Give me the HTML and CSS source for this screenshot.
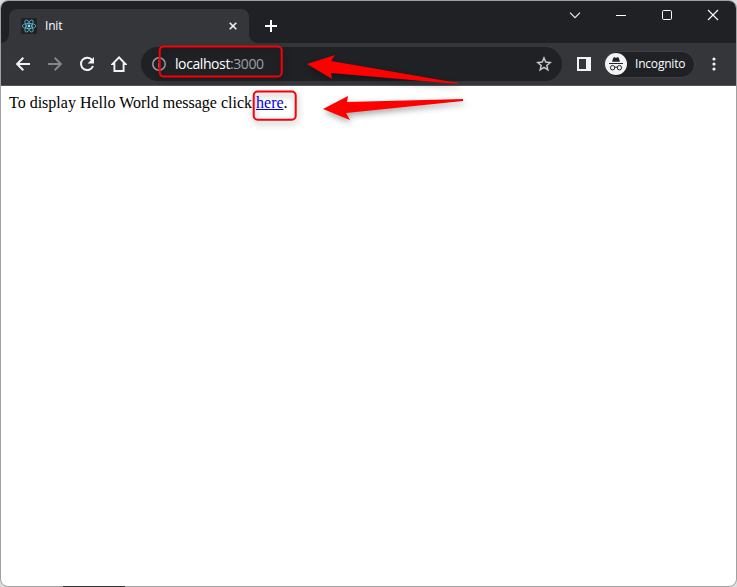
FILE: index.html
```html
<!DOCTYPE html>
<html lang="en">
<head>
<meta charset="utf-8">
<title>Init</title>
<link rel="stylesheet" href="styles.css">
</head>
<body>
<div class="window">
  <header class="tabstrip">
    <div class="tab">
      <svg class="favicon" width="16" height="16" viewBox="0 0 16 16"><rect width="16" height="16" rx="1" fill="#222"/><g fill="none" stroke="#58b4cc" stroke-width=".85"><ellipse cx="8" cy="8" rx="6.8" ry="2.6"/><ellipse cx="8" cy="8" rx="6.8" ry="2.6" transform="rotate(60 8 8)"/><ellipse cx="8" cy="8" rx="6.8" ry="2.6" transform="rotate(120 8 8)"/></g><circle cx="8" cy="8" r="1.4" fill="#7be4fa"/></svg>
      <span class="tab-title">Init</span>
      <svg class="tab-close" width="8" height="8" viewBox="0 0 8 8"><path d="M.7.7l6.6 6.6M7.3.7L.7 7.3" stroke="#f1f3f4" stroke-width="1.6"/></svg>
    </div>
    <svg class="new-tab" width="12" height="12" viewBox="0 0 12 12"><path d="M6 0v12M0 6h12" stroke="#fff" stroke-width="2"/></svg>
    <div class="controls">
      <svg width="12" height="12" viewBox="0 0 12 12"><path d="M1 3.7l5 5 5-5" fill="none" stroke="#f2f2f2" stroke-width="1.1"/></svg>
      <svg width="12" height="12" viewBox="0 0 12 12"><path d="M1 6.5h10" stroke="#fff"/></svg>
      <svg width="12" height="12" viewBox="0 0 12 12"><rect x="1.5" y="1.5" width="9" height="9" rx="1.2" fill="none" stroke="#fff"/></svg>
      <svg width="12" height="12" viewBox="0 0 12 12"><path d="M1 1l10 10M11 1L1 11" stroke="#fff" stroke-width="1.1"/></svg>
    </div>
  </header>
  <nav class="toolbar">
    <div class="nav-buttons">
      <svg width="16" height="16" viewBox="0 0 16 16"><path d="M15 8H2.5M8.3 1.8L2.1 8l6.2 6.2" fill="none" stroke="#f1f3f4" stroke-width="2"/></svg>
      <svg width="16" height="16" viewBox="0 0 16 16"><path d="M1 8h12.5M7.7 1.8L13.9 8l-6.2 6.2" fill="none" stroke="#85868a" stroke-width="2"/></svg>
      <svg width="16" height="16" viewBox="0 0 16 16"><path d="M13.2 4.2A6.2 6.2 0 1 0 14 10" fill="none" stroke="#f1f3f4" stroke-width="2"/><path d="M15 1v6.4H8.6z" fill="#f1f3f4"/></svg>
      <svg width="16" height="16" viewBox="0 0 16 16"><path d="M8 1.3L1.6 8H3.4v7h9.2V8h1.8z" fill="none" stroke="#f1f3f4" stroke-width="1.9"/></svg>
    </div>
    <div class="omnibox">
      <svg class="info" width="14" height="14" viewBox="0 0 14 14"><circle cx="7" cy="7" r="6.2" fill="none" stroke="#9aa0a6" stroke-width="1.5"/><path d="M7 3.3v1.5M7 6.1v4.6" stroke="#9aa0a6" stroke-width="1.5"/></svg>
      <span class="url">localhost<span class="port">:3000</span></span>
      <svg class="star" width="16" height="16" viewBox="0 0 16 16"><path d="M8 2l1.75 4.1 4.45.4-3.4 2.9 1.05 4.4L8 11.45 4.15 13.8 5.2 9.4 1.8 6.5l4.45-.4z" fill="none" stroke="#c4c7cb" stroke-width="1.5"/></svg>
    </div>
    <svg class="side-panel" width="14" height="14" viewBox="0 0 14 14"><path fill="#f1f3f4" fill-rule="evenodd" d="M0 0h14v14H0zM2 2v10h7V2z"/></svg>
    <div class="profile">
      <svg width="22" height="22" viewBox="0 0 22 22"><circle cx="11" cy="11" r="11" fill="#f1f3f4"/><path d="M7 8.8l1.3-4 .8-.5 1.9.5 1.9-.5.8.5 1.3 4z" fill="#202124"/><path d="M4 10.5h14" stroke="#202124" stroke-width="1.2"/><g fill="none" stroke="#202124"><circle cx="7.6" cy="14.7" r="2.2"/><circle cx="14.4" cy="14.7" r="2.2"/><path d="M9.7 14.4q1.3-.8 2.6 0"/></g></svg>
      <span>Incognito</span>
    </div>
    <svg class="menu" width="4" height="14" viewBox="0 0 4 14" fill="#f1f3f4"><circle cx="2" cy="2" r="1.6"/><circle cx="2" cy="7" r="1.6"/><circle cx="2" cy="12" r="1.6"/></svg>
  </nav>
  <main class="page">To display Hello World message click <a href="#">here</a>.</main>
</div>
<svg class="annotations" width="737" height="587" viewBox="0 0 737 587">
  <g fill="none" stroke="#f80008" stroke-width="2"><rect x="159.7" y="46.5" width="122" height="30" rx="4"/><rect x="253.7" y="91.5" width="42" height="28.3" rx="4"/></g>
  <path d="M307 64l28-9-4 6 127 22v1l-127-11 1 6z" fill="#f00"/>
  <path d="M323 109l25-13-1 6 116-3v2l-117 12 4 7z" fill="#f00"/>
</svg>
<div class="taskbar-edge"></div>
</body>
</html>
```
FILE: styles.css
```css
* { box-sizing: border-box; }
html, body { margin: 0; height: 100%; overflow: hidden; }
body { background: #dcdcdc; position: relative; }
svg { display: block; flex: none; }
.window {
  width: 737px; height: 587px;
  border: 1px solid #a0a0a0; border-radius: 8px;
  overflow: hidden; background: #fff;
}
.tabstrip {
  height: 42px; background: #202124;
  display: flex; align-items: flex-end; padding-left: 8px;
}
.tab {
  width: 240px; height: 34px; background: #35363a;
  border-radius: 8px 8px 0 0; position: relative;
  display: flex; align-items: center; padding: 0 12px;
}
.tab::before, .tab::after {
  content: ""; position: absolute; bottom: 0; width: 8px; height: 8px;
}
.tab::before { left: -8px; background: radial-gradient(circle at 0 0, transparent 7.5px, #35363a 8px); }
.tab::after { right: -8px; background: radial-gradient(circle at 100% 0, transparent 7.5px, #35363a 8px); }
.tab-title { font: 12px/16px "Open Sans", sans-serif; letter-spacing: -.2px; color: #fff; margin-left: 8px; }
.tab-close { margin-left: auto; }
.new-tab { margin: 0 0 11px 16px; }
.controls { margin: 0 17px 22px auto; display: flex; gap: 34px; }
.toolbar {
  height: 43px; background: #35363a; border-bottom: 1px solid #55565a;
  display: flex; align-items: center; padding-left: 14px;
}
.nav-buttons { display: flex; gap: 16px; }
.omnibox {
  width: 421px; height: 34px; margin-left: 14px; border-radius: 17px;
  background: #202124; display: flex; align-items: center; padding: 0 10px 0 11px;
}
.url { font: 14px/18px "Open Sans", sans-serif; letter-spacing: -.41px; color: #fff; margin-left: 9px; }
.port { color: #9aa0a6; }
.star { margin-left: auto; }
.side-panel { margin-left: 15px; }
.profile {
  width: 91px; height: 27px; margin-left: 13px; border-radius: 14px;
  background: #202124; border: 1px solid #3f4044;
  display: flex; align-items: center; gap: 8px; padding-left: 0;
  font: 12px/16px "Open Sans", sans-serif; letter-spacing: -.2px; color: #fff;
}
.menu { margin-left: 17px; }
.page { padding: 8px; font: 16px/18px "Liberation Serif", serif; color: #000; }
.page a { color: #00e; }
.annotations {
  position: absolute; left: 0; top: 0; pointer-events: none;
  filter: drop-shadow(1px 3px 3px rgba(0, 0, 0, .35));
}
.taskbar-edge { position: absolute; left: 63px; top: 586px; width: 62px; height: 1px; background: #333; }
```
